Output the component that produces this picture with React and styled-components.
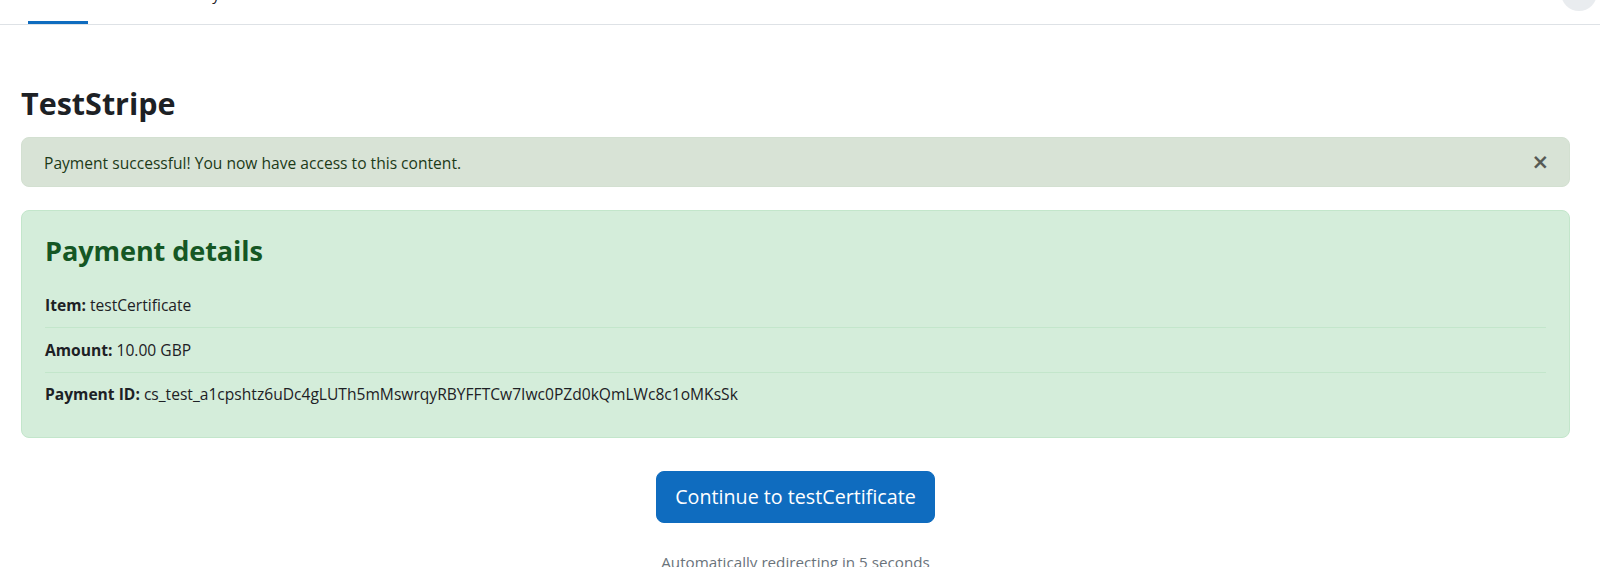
import React from "react";
import styled, { createGlobalStyle } from "styled-components";

const GlobalStyle = createGlobalStyle`
  html, body { margin: 0; padding: 0; background: #fff; }
  body {
    font-family: "Open Sans", "Noto Sans", sans-serif;
    font-size: 15.6px;
    line-height: 1.5;
    color: #1d2125;
    overflow: hidden;
  }
  * { box-sizing: border-box; }
`;

const Navbar = styled.nav`
  height: 61px;
  margin-top: -36px;
  border-bottom: 1px solid #dee2e6;
  display: flex;
  align-items: stretch;
  padding: 0 3px 0 28px;
`;

const NavList = styled.div`
  display: flex;
  align-items: stretch;
  flex: 1;
`;

const NavLink = styled.a`
  display: flex;
  align-items: center;
  padding: 3px ${(p) => (p.$wide ? "12px" : "9px")} 0;
  border-bottom: 3px solid ${(p) => (p.$active ? "#0f6cbf" : "transparent")};
  color: #1d2125;
  text-decoration: none;
  font-size: 15px;
`;

const Avatar = styled.div`
  align-self: center;
  width: 36px;
  height: 36px;
  border-radius: 50%;
  background: #e9ecef;
  margin-top: -2px;
`;

const Main = styled.main`
  padding: 0 30px 0 21px;
`;

const PageTitle = styled.h2`
  margin: 60px 0 15px;
  font-size: 30.5px;
  line-height: 1.2;
  font-weight: 700;
  color: #1d2125;
`;

const Alert = styled.div`
  display: flex;
  align-items: center;
  background: #d8e3d6;
  border: 1px solid #d3e0d1;
  border-radius: 8px;
  padding: 14px 14px 12px 22px;
  color: #1c3a18;
  line-height: 22.5px;
`;

const AlertText = styled.span`
  flex: 1;
`;

const CloseButton = styled.button`
  border: 0;
  background: transparent;
  padding: 0 6px;
  font-family: "DejaVu Sans", sans-serif;
  font-size: 21px;
  font-weight: 700;
  line-height: 1;
  color: #000;
  opacity: 0.6;
  cursor: pointer;
`;

const Card = styled.section`
  margin-top: 23px;
  background: #d4edda;
  border: 1px solid #c3e6cb;
  border-radius: 8px;
  padding: 24px 23px 20px 23px;
`;

const CardTitle = styled.h3`
  margin: 0 0 17px;
  font-size: 27.1px;
  line-height: 31.5px;
  font-weight: 700;
  color: #155724;
  letter-spacing: -0.1px;
`;

const DetailRow = styled.div`
  padding: 10.5px 0;
  line-height: 22.5px;
  border-bottom: 1px solid ${(p) => (p.$last ? "transparent" : "#c3e6cb")};
`;

const Label = styled.strong`
  font-weight: 700;
`;

const Actions = styled.div`
  text-align: center;
  padding-top: 33px;
`;

const PrimaryButton = styled.button`
  display: inline-block;
  font-family: inherit;
  font-size: 19.7px;
  line-height: 28px;
  padding: 11px 18px;
  border: 1px solid #0f6cbf;
  border-radius: 8px;
  background: #0f6cbf;
  color: #fff;
  cursor: pointer;
`;

const Muted = styled.p`
  margin: 28px 0 0;
  font-size: 15.2px;
  color: #6a737b;
`;

export default function App() {
  const rows = [
    ["Item:", "testCertificate"],
    ["Amount:", "10.00 GBP"],
    ["Payment ID:", "cs_test_a1cpshtz6uDc4gLUTh5mMswrqyRBYFFTCw7Iwc0PZd0kQmLWc8c1oMKsSk"],
  ];
  return (
    <>
      <GlobalStyle />
      <Navbar>
        <NavList>
          <NavLink $active href="#">Home</NavLink>
          <NavLink $wide href="#">Dashboard</NavLink>
          <NavLink href="#">My courses</NavLink>
          <NavLink href="#">Site administration</NavLink>
        </NavList>
        <Avatar />
      </Navbar>
      <Main>
        <PageTitle>TestStripe</PageTitle>
        <Alert role="alert">
          <AlertText>Payment successful! You now have access to this content.</AlertText>
          <CloseButton aria-label="Close">×</CloseButton>
        </Alert>
        <Card>
          <CardTitle>Payment details</CardTitle>
          {rows.map(([label, value], i) => (
            <DetailRow key={label} $last={i === rows.length - 1}>
              <Label>{label}</Label> {value}
            </DetailRow>
          ))}
        </Card>
        <Actions>
          <PrimaryButton>Continue to testCertificate</PrimaryButton>
          <Muted>Automatically redirecting in 5 seconds</Muted>
        </Actions>
      </Main>
    </>
  );
}
